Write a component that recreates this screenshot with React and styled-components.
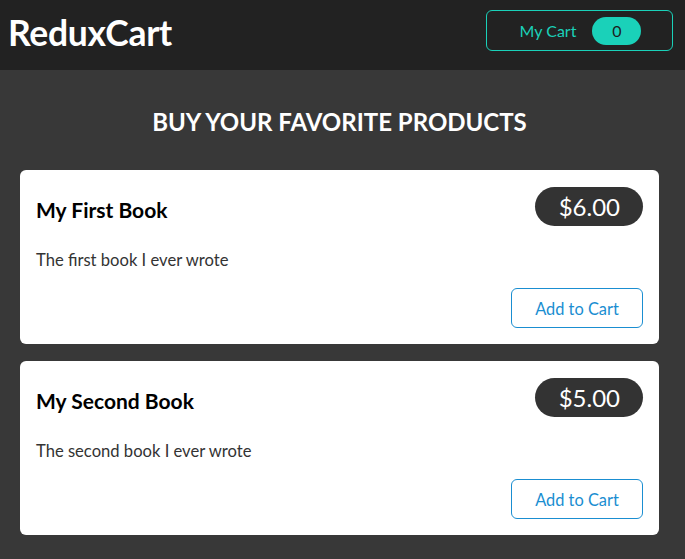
import React from 'react';
import styled, { createGlobalStyle } from 'styled-components';

const Global = createGlobalStyle`
  * { box-sizing: border-box; }
  html, body { margin: 0; padding: 0; }
  body {
    font-family: Lato, "Noto Sans", sans-serif;
    background: #383838;
    width: 685px;
    height: 559px;
    overflow: hidden;
  }
`;

const Header = styled.header`
  height: 70px;
  background: #222222;
  display: flex;
  align-items: flex-start;
  justify-content: space-between;
  padding: 10px 12px 0 8px;
`;

const Logo = styled.h1`
  margin: 0;
  color: #ffffff;
  font-size: 35.5px;
  font-weight: 700;
  line-height: 46px;
  letter-spacing: -0.3px;
`;

const CartButton = styled.button`
  font: inherit;
  width: 187px;
  height: 41px;
  border: 1px solid #1ad1b9;
  border-radius: 6px;
  background: transparent;
  color: #1ad1b9;
  display: flex;
  align-items: center;
  justify-content: center;
  gap: 16px;
  padding: 0 0 0 2px;
  font-size: 16px;
  cursor: pointer;
`;

const Badge = styled.span`
  display: inline-flex;
  align-items: center;
  justify-content: center;
  width: 49px;
  height: 28px;
  border-radius: 14px;
  background: #1ad1b9;
  color: #1d1d1d;
  font-size: 16px;
`;

const Main = styled.main`
  width: 639px;
  margin-left: 20px;
  padding-top: 37px;
`;

const Title = styled.h2`
  margin: 0 0 33px;
  text-align: center;
  color: #ffffff;
  font-size: 24px;
  line-height: 30px;
  font-weight: 700;
`;

const List = styled.ul`
  list-style: none;
  margin: 0;
  padding: 0;
  display: flex;
  flex-direction: column;
  gap: 17px;
`;

const Card = styled.li`
  background: #ffffff;
  border-radius: 6px;
  padding: 16px;
  display: flex;
  flex-direction: column;
`;

const ItemHeader = styled.div`
  display: flex;
  justify-content: space-between;
  align-items: center;
  height: 41px;
`;

const ItemName = styled.h3`
  margin: 5px 0 0;
  font-size: 21px;
  font-weight: 700;
  color: #000000;
`;

const Price = styled.div`
  height: 39px;
  padding: 0 23px 0 24px;
  border-radius: 20px;
  background: #333333;
  color: #ffffff;
  font-size: 24px;
  display: flex;
  align-items: center;
`;

const Desc = styled.p`
  margin: 21px 0 0;
  font-size: 16.6px;
  line-height: 24px;
  color: #333333;
`;

const Actions = styled.div`
  display: flex;
  justify-content: flex-end;
  margin-top: 16px;
`;

const AddButton = styled.button`
  font: inherit;
  font-size: 16.4px;
  width: 132px;
  height: 40px;
  border: 1px solid #1a8ed1;
  border-radius: 6px;
  background: transparent;
  color: #1a8ed1;
  cursor: pointer;
`;

const products = [
  { id: 1, name: 'My First Book', price: 6, desc: 'The first book I ever wrote' },
  { id: 2, name: 'My Second Book', price: 5, desc: 'The second book I ever wrote' },
];

export default function App() {
  return (
    <>
      <Global />
      <Header>
        <Logo>ReduxCart</Logo>
        <CartButton>
          <span>My Cart</span>
          <Badge>0</Badge>
        </CartButton>
      </Header>
      <Main>
        <Title>BUY YOUR FAVORITE PRODUCTS</Title>
        <List>
          {products.map((p) => (
            <Card key={p.id}>
              <ItemHeader>
                <ItemName>{p.name}</ItemName>
                <Price>${p.price.toFixed(2)}</Price>
              </ItemHeader>
              <Desc>{p.desc}</Desc>
              <Actions>
                <AddButton>Add to Cart</AddButton>
              </Actions>
            </Card>
          ))}
        </List>
      </Main>
    </>
  );
}
